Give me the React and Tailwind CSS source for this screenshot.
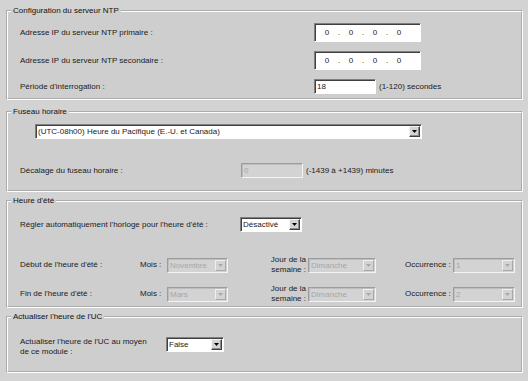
import React from 'react'

const Arrow = ({ disabled }) => (
  <svg width="5" height="3" viewBox="0 0 5 3" className="block">
    <path d="M0 0h5L2.5 3z" fill={disabled ? '#a8a8a8' : '#000'} />
  </svg>
)

function Combo({ w, value, disabled }) {
  return (
    <div
      className={`flex h-[15px] ${w} p-[1px] border ${
        disabled
          ? 'bg-[#d3d3d3] text-[#a6a6a6] border-t-[#9c9c9c] border-l-[#9c9c9c] border-b-[#f4f4f4] border-r-[#f4f4f4] shadow-[inset_1px_1px_0_#bdbdbd]'
          : 'bg-white text-[#1a1a1a] border-t-[#808080] border-l-[#808080] border-b-white border-r-white shadow-[inset_1px_1px_0_#404040]'
      }`}
    >
      <span className="flex-1 truncate pl-[1px] leading-[11px]">{value}</span>
      <span
        className={`flex h-full w-[11px] items-center justify-center border ${
          disabled
            ? 'bg-[#d3d3d3] border-t-[#f0f0f0] border-l-[#f0f0f0] border-b-[#a8a8a8] border-r-[#a8a8a8]'
            : 'bg-[#d4d4d4] border-t-[#f4f4f4] border-l-[#f4f4f4] border-b-[#404040] border-r-[#404040] shadow-[inset_-1px_-1px_0_#8a8a8a]'
        }`}
      >
        <Arrow disabled={disabled} />
      </span>
    </div>
  )
}

function TextBox({ w, value, disabled }) {
  return (
    <div
      className={`flex h-[15px] ${w} items-center border pl-[2px] ${
        disabled
          ? 'bg-[#d3d3d3] text-[#a6a6a6] border-t-[#9c9c9c] border-l-[#9c9c9c] border-b-[#f4f4f4] border-r-[#f4f4f4] shadow-[inset_1px_1px_0_#bdbdbd]'
          : 'bg-white text-[#1a1a1a] border-t-[#808080] border-l-[#808080] border-b-white border-r-white shadow-[inset_1px_1px_0_#404040]'
      }`}
    >
      {value}
    </div>
  )
}

function IpBox() {
  return (
    <div className="flex h-[19px] w-[107px] items-center border border-t-[#808080] border-l-[#808080] border-b-white border-r-white bg-white pl-[1px] shadow-[inset_1px_1px_0_#404040] text-[#1a1a1a]">
      {[0, 1, 2, 3].map(i => (
        <React.Fragment key={i}>
          <span className="w-[22px] text-center">0</span>
          {i < 3 && <span className="w-[2px] text-center">.</span>}
        </React.Fragment>
      ))}
    </div>
  )
}

function Group({ title, className, children }) {
  return (
    <fieldset className={`w-[517px] border-2 border-white [border-style:groove] [--tw-border-style:groove] bg-[#cecece] pl-[3px] ${className}`}>
      <legend className="px-[2px] leading-[10px] text-[#111]">{title}</legend>
      {children}
    </fieldset>
  )
}

export default function App() {
  return (
    <div className="h-[381px] w-[528px] overflow-hidden bg-[#d3d3d3] pl-[6px] font-['Liberation_Sans',Arial,sans-serif] text-[8px] leading-[10px] text-[#1a1a1a]">
      <div className="h-[6px]" />

      {/* NTP */}
      <Group title="Configuration du serveur NTP">
        <div className="pl-[9px] pb-[4px]">
          <div className="mt-[7px] flex h-[19px] items-center">
            <span className="w-[294px]">Adresse IP du serveur NTP primaire :</span>
            <IpBox />
          </div>
          <div className="mt-[9px] flex h-[19px] items-center">
            <span className="w-[294px]">Adresse IP du serveur NTP secondaire :</span>
            <IpBox />
          </div>
          <div className="mt-[9px] flex h-[15px] items-center">
            <span className="w-[294px]">Période d'interrogation :</span>
            <TextBox w="w-[62px]" value="18" />
            <span className="ml-[3px]">(1-120) secondes</span>
          </div>
        </div>
      </Group>

      {/* Fuseau */}
      <Group title="Fuseau horaire" className="mt-[7px]">
        <div className="pb-[12px]">
          <div className="mt-[7px] ml-[24px]">
            <Combo w="w-[387px]" value="(UTC-08h00) Heure du Pacifique (E.-U. et Canada)" />
          </div>
          <div className="mt-[24px] flex h-[15px] items-center pl-[9px]">
            <span className="w-[221px]">Décalage du fuseau horaire :</span>
            <TextBox w="w-[62px]" value="0" disabled />
            <span className="ml-[3px]">(-1439 à +1439) minutes</span>
          </div>
        </div>
      </Group>

      {/* Heure d'ete */}
      <Group title="Heure d'été" className="mt-[4px]">
        <div className="pl-[9px] pb-[2px]">
          <div className="mt-[11px] flex h-[15px] items-center">
            <span className="w-[220px]">Régler automatiquement l'horloge pour l'heure d'été :</span>
            <Combo w="w-[62px]" value="Désactivé" />
          </div>
          {[
            ['Début de l\'heure d\'été :', 'Novembre', '1', 'mt-[23px]'],
            ['Fin de l\'heure d\'été :', 'Mars', '2', 'mt-[9px]'],
          ].map(([label, mois, occ, mt]) => (
            <div key={label} className={`${mt} flex h-[20px] items-center`}>
              <span className="w-[120px]">{label}</span>
              <span className="w-[27px]">Mois :</span>
              <Combo w="w-[61px]" value={mois} disabled />
              <span className="w-[80px] pr-[2px] text-right">Jour de la<br />semaine :</span>
              <Combo w="w-[68px]" value="Dimanche" disabled />
              <span className="w-[77px] pl-[29px]">Occurrence :</span>
              <Combo w="w-[62px]" value={occ} disabled />
            </div>
          ))}
        </div>
      </Group>

      {/* UC */}
      <Group title="Actualiser l'heure de l'UC" className="mt-[4px]">
        <div className="pl-[9px] pb-[14px]">
          <div className="mt-[15px] flex items-start">
            <span className="w-[146px]">Actualiser l'heure de l'UC au moyen<br />de ce module :</span>
            <Combo w="w-[58px]" value="False" />
          </div>
        </div>
      </Group>
    </div>
  )
}
